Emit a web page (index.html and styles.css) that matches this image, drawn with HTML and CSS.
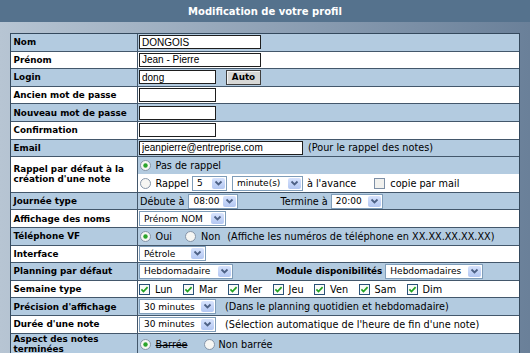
FILE: index.html
```html
<!DOCTYPE html>
<html lang="fr">
<head>
<meta charset="utf-8">
<title>Modification de votre profil</title>
<link rel="stylesheet" href="styles.css">
</head>
<body>
<div class="head">Modification de votre profil</div>
<div class="form">
  <div class="lab">Nom</div>
  <div class="val"><input class="txt w122" value="DONGOIS"></div>

  <div class="lab w">Prénom</div>
  <div class="val w"><input class="txt w122" value="Jean - Pierre"></div>

  <div class="lab">Login</div>
  <div class="val"><input class="txt w77" value="dong"><button class="btn">Auto</button></div>

  <div class="lab w">Ancien mot de passe</div>
  <div class="val w"><input class="txt w77" type="password"></div>

  <div class="lab">Nouveau mot de passe</div>
  <div class="val"><input class="txt w77" type="password"></div>

  <div class="lab w">Confirmation</div>
  <div class="val w"><input class="txt w77" type="password"></div>

  <div class="lab">Email</div>
  <div class="val"><input class="txt w164" value="jeanpierre@entreprise.com"><span class="m5">(Pour le rappel des notes)</span></div>

  <div class="lab w two">Rappel par défaut à la création d'une note</div>
  <div class="val stack">
    <div class="sub">
      <svg class="rd" viewBox="0 0 11 11"><circle cx="5.5" cy="5.5" r="5" fill="#f6f6f3" stroke="#8595a8"/><circle cx="5.5" cy="5.5" r="2.2" fill="#2aa42a"/></svg>
      <span class="m5">Pas de rappel</span>
    </div>
    <div class="sub w">
      <svg class="rd" viewBox="0 0 11 11"><circle cx="5.5" cy="5.5" r="5" fill="#f6f6f3" stroke="#8595a8"/></svg>
      <span class="m5">Rappel</span>
      <span class="sel w35 m3"><span class="v">5</span><span class="b"><svg viewBox="0 0 9 7"><path d="M1.5 1.5 L4.5 4.5 L7.5 1.5" stroke="#4d6185" stroke-width="1.8" fill="none"/></svg></span></span>
      <span class="sel w71 m5"><span class="v">minute(s)</span><span class="b"><svg viewBox="0 0 9 7"><path d="M1.5 1.5 L4.5 4.5 L7.5 1.5" stroke="#4d6185" stroke-width="1.8" fill="none"/></svg></span></span>
      <span class="m4">à l'avance</span>
      <svg class="cb m18" viewBox="0 0 11 11"><rect x="0.5" y="0.5" width="10" height="10" fill="#f1f1ee" stroke="#7d8fa6"/></svg>
      <span class="m5">copie par mail</span>
    </div>
  </div>

  <div class="lab">Journée type</div>
  <div class="val">
    <span class="p1">Débute à</span>
    <span class="sel w50 m4"><span class="v">08:00</span><span class="b"><svg viewBox="0 0 9 7"><path d="M1.5 1.5 L4.5 4.5 L7.5 1.5" stroke="#4d6185" stroke-width="1.8" fill="none"/></svg></span></span>
    <span class="m42">Termine à</span>
    <span class="sel w52 m3"><span class="v">20:00</span><span class="b"><svg viewBox="0 0 9 7"><path d="M1.5 1.5 L4.5 4.5 L7.5 1.5" stroke="#4d6185" stroke-width="1.8" fill="none"/></svg></span></span>
  </div>

  <div class="lab w">Affichage des noms</div>
  <div class="val w">
    <span class="sel w87"><span class="v">Prénom NOM</span><span class="b"><svg viewBox="0 0 9 7"><path d="M1.5 1.5 L4.5 4.5 L7.5 1.5" stroke="#4d6185" stroke-width="1.8" fill="none"/></svg></span></span>
  </div>

  <div class="lab">Téléphone VF</div>
  <div class="val">
    <svg class="rd" viewBox="0 0 11 11"><circle cx="5.5" cy="5.5" r="5" fill="#f6f6f3" stroke="#8595a8"/><circle cx="5.5" cy="5.5" r="2.2" fill="#2aa42a"/></svg>
    <span class="m5">Oui</span>
    <svg class="rd m13" viewBox="0 0 11 11"><circle cx="5.5" cy="5.5" r="5" fill="#f6f6f3" stroke="#8595a8"/></svg>
    <span class="m5">Non</span>
    <span class="m7">(Affiche les numéros de téléphone en XX.XX.XX.XX.XX)</span>
  </div>

  <div class="lab w">Interface</div>
  <div class="val w">
    <span class="sel w67"><span class="v">Pétrole</span><span class="b"><svg viewBox="0 0 9 7"><path d="M1.5 1.5 L4.5 4.5 L7.5 1.5" stroke="#4d6185" stroke-width="1.8" fill="none"/></svg></span></span>
  </div>

  <div class="lab">Planning par défaut</div>
  <div class="val">
    <span class="sel w94"><span class="v">Hebdomadaire</span><span class="b"><svg viewBox="0 0 9 7"><path d="M1.5 1.5 L4.5 4.5 L7.5 1.5" stroke="#4d6185" stroke-width="1.8" fill="none"/></svg></span></span>
    <span class="sub-lab m43">Module disponibilités</span>
    <span class="sel w98 m3"><span class="v">Hebdomadaires</span><span class="b"><svg viewBox="0 0 9 7"><path d="M1.5 1.5 L4.5 4.5 L7.5 1.5" stroke="#4d6185" stroke-width="1.8" fill="none"/></svg></span></span>
  </div>

  <div class="lab w">Semaine type</div>
  <div class="val w days">
    <span class="day"><svg class="cb" viewBox="0 0 11 11"><rect x="0.5" y="0.5" width="10" height="10" fill="#fbfbf9" stroke="#2a5278"/><path d="M2.4 5.4 L4.5 7.6 L8.6 3.1" stroke="#21a121" stroke-width="1.7" fill="none"/></svg><span>Lun</span></span>
    <span class="day"><svg class="cb" viewBox="0 0 11 11"><rect x="0.5" y="0.5" width="10" height="10" fill="#fbfbf9" stroke="#2a5278"/><path d="M2.4 5.4 L4.5 7.6 L8.6 3.1" stroke="#21a121" stroke-width="1.7" fill="none"/></svg><span>Mar</span></span>
    <span class="day"><svg class="cb" viewBox="0 0 11 11"><rect x="0.5" y="0.5" width="10" height="10" fill="#fbfbf9" stroke="#2a5278"/><path d="M2.4 5.4 L4.5 7.6 L8.6 3.1" stroke="#21a121" stroke-width="1.7" fill="none"/></svg><span>Mer</span></span>
    <span class="day"><svg class="cb" viewBox="0 0 11 11"><rect x="0.5" y="0.5" width="10" height="10" fill="#fbfbf9" stroke="#2a5278"/><path d="M2.4 5.4 L4.5 7.6 L8.6 3.1" stroke="#21a121" stroke-width="1.7" fill="none"/></svg><span>Jeu</span></span>
    <span class="day"><svg class="cb" viewBox="0 0 11 11"><rect x="0.5" y="0.5" width="10" height="10" fill="#fbfbf9" stroke="#2a5278"/><path d="M2.4 5.4 L4.5 7.6 L8.6 3.1" stroke="#21a121" stroke-width="1.7" fill="none"/></svg><span>Ven</span></span>
    <span class="day"><svg class="cb" viewBox="0 0 11 11"><rect x="0.5" y="0.5" width="10" height="10" fill="#fbfbf9" stroke="#2a5278"/><path d="M2.4 5.4 L4.5 7.6 L8.6 3.1" stroke="#21a121" stroke-width="1.7" fill="none"/></svg><span>Sam</span></span>
    <span class="day"><svg class="cb" viewBox="0 0 11 11"><rect x="0.5" y="0.5" width="10" height="10" fill="#fbfbf9" stroke="#2a5278"/><path d="M2.4 5.4 L4.5 7.6 L8.6 3.1" stroke="#21a121" stroke-width="1.7" fill="none"/></svg><span>Dim</span></span>
  </div>

  <div class="lab">Précision d'affichage</div>
  <div class="val">
    <span class="sel w77"><span class="v">30 minutes</span><span class="b"><svg viewBox="0 0 9 7"><path d="M1.5 1.5 L4.5 4.5 L7.5 1.5" stroke="#4d6185" stroke-width="1.8" fill="none"/></svg></span></span>
    <span class="m9">(Dans le planning quotidien et hebdomadaire)</span>
  </div>

  <div class="lab w">Durée d'une note</div>
  <div class="val w">
    <span class="sel w77"><span class="v">30 minutes</span><span class="b"><svg viewBox="0 0 9 7"><path d="M1.5 1.5 L4.5 4.5 L7.5 1.5" stroke="#4d6185" stroke-width="1.8" fill="none"/></svg></span></span>
    <span class="m9">(Sélection automatique de l'heure de fin d'une note)</span>
  </div>

  <div class="lab two">Aspect des notes terminées</div>
  <div class="val">
    <svg class="rd" viewBox="0 0 11 11"><circle cx="5.5" cy="5.5" r="5" fill="#f6f6f3" stroke="#8595a8"/><circle cx="5.5" cy="5.5" r="2.2" fill="#2aa42a"/></svg>
    <span class="m5 strike">Barrée</span>
    <svg class="rd m16" viewBox="0 0 11 11"><circle cx="5.5" cy="5.5" r="5" fill="#f6f6f3" stroke="#8595a8"/></svg>
    <span class="m4">Non barrée</span>
  </div>
</div>
</body>
</html>
```

FILE: styles.css
```css
html, body {
  margin: 0;
  padding: 0;
}
body {
  width: 530px;
  height: 353px;
  overflow: hidden;
  background: linear-gradient(to right, #b7c5d3 0%, #90a2b6 50%, #6a8099 100%);
  font-family: "DejaVu Sans", Verdana, sans-serif;
  font-size: 9.7px;
  color: #000;
}
.head {
  height: 22px;
  background: #55728d;
  color: #fff;
  font-weight: bold;
  font-size: 10px;
  display: flex;
  align-items: center;
  justify-content: center;
}
.form {
  margin: 11px 0 0 10px;
  width: 510px;
  box-sizing: border-box;
  border: 1px solid #34495d;
  background: #43576b;
  display: grid;
  grid-template-columns: 126px 1fr;
  grid-template-rows: repeat(7, 16.6px) 34.6px repeat(8, 16.6px) 22px;
  gap: 1px;
}
.lab {
  background: #b3cbe0;
  font-weight: bold;
  font-size: 8.8px;
  padding-left: 2.5px;
  display: flex;
  align-items: center;
  white-space: nowrap;
}
.lab.two {
  white-space: normal;
  line-height: 9.5px;
  align-items: flex-start;
  padding-top: 1.5px;
  padding-right: 2px;
}
.lab.w.two {
  align-items: center;
  line-height: 10.5px;
  padding-top: 0;
}
.val {
  background: #b3cbe0;
  display: flex;
  align-items: center;
  padding-left: 1px;
  white-space: nowrap;
}
.lab.w, .val.w, .sub.w {
  background: #fff;
}
.val.stack {
  flex-direction: column;
  align-items: stretch;
  padding-left: 0;
  background: #fff;
}
.sub {
  flex: 1;
  display: flex;
  align-items: center;
  padding-left: 1px;
  background: #b3cbe0;
}
.txt {
  height: 14px;
  box-sizing: border-box;
  border: 1px solid #1e1e1e;
  margin: 0;
  padding: 0 0 0 2px;
  background: #fff;
  font-family: "Liberation Sans", Arial, sans-serif;
  font-size: 10px;
  color: #000;
  outline: none;
}
.w122 { width: 122px; }
.w77 { width: 77px; }
.w164 { width: 164px; }
.btn {
  margin: 0 0 0 10px;
  width: 35px;
  height: 15px;
  padding: 0;
  box-sizing: border-box;
  border: 1px solid #3f3f3f;
  background: #d8d8d6;
  box-shadow: inset 1px 1px 0 #f4f4f4;
  font-family: "DejaVu Sans", Verdana, sans-serif;
  font-weight: bold;
  font-size: 8.8px;
  color: #000;
}
.sel {
  display: inline-flex;
  align-items: center;
  height: 15px;
  box-sizing: border-box;
  border: 1px solid #7f9db9;
  background: #fff;
  font-size: 9px;
  padding-left: 4px;
  flex: none;
}
.sel .v {
  flex: 1;
}
.sel .b {
  width: 13px;
  height: 11px;
  margin-right: 1px;
  background: linear-gradient(#d7e3fd, #b3c7f2);
  border-radius: 2px;
  display: flex;
  align-items: center;
  justify-content: center;
}
.sel .b svg {
  width: 9px;
  height: 7px;
}
.w35 { width: 35px; }
.w50 { width: 50px; }
.w52 { width: 52px; }
.w67 { width: 67px; }
.w71 { width: 71px; }
.w87 { width: 87px; }
.w94 { width: 94px; }
.w98 { width: 98px; }
.rd, .cb {
  width: 11px;
  height: 11px;
  flex: none;
}
.rd { margin-left: 0.5px; }
.p1 { padding-left: 1px; }
.m3 { margin-left: 3px; }
.m4 { margin-left: 4px; }
.m5 { margin-left: 5px; }
.m7 { margin-left: 7px; }
.m9 { margin-left: 9px; }
.m13 { margin-left: 13px; }
.m16 { margin-left: 16px; }
.m18 { margin-left: 18px; }
.m42 { margin-left: 42px; }
.m43 { margin-left: 43px; }
.sub-lab {
  font-weight: bold;
  font-size: 8.8px;
}
.days {
  gap: 10.5px;
}
.day {
  display: flex;
  align-items: center;
  gap: 5px;
}
.strike {
  text-decoration: line-through;
}
```
